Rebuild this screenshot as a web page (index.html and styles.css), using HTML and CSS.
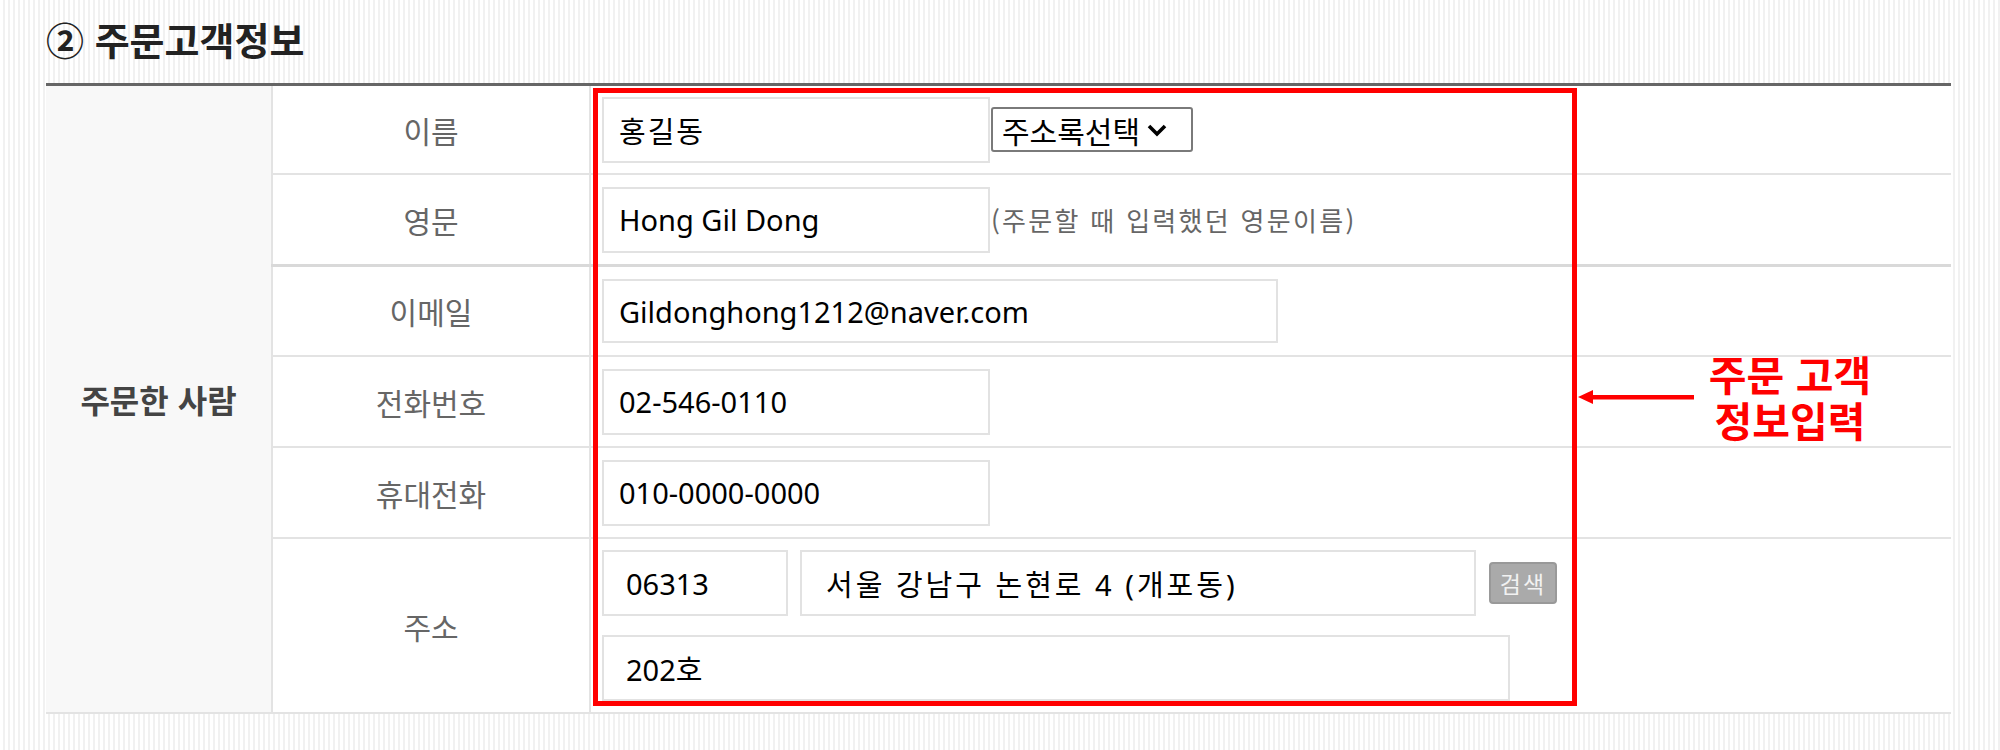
FILE: index.html
```html
<!DOCTYPE html>
<html lang="ko">
<head>
    <meta charset="UTF-8">
    <meta name="viewport" content="width=device-width, initial-scale=1.0">
    <title>주문고객정보</title>
    <link rel="stylesheet" href="styles.css">
</head>
<body>
    <div class="page">
        <h2 class="sec-title">② 주문고객정보</h2>

        <div class="form-area">
            <table class="order-table">
                <colgroup>
                    <col class="col-group">
                    <col class="col-label">
                    <col>
                </colgroup>
                <tr class="row-first">
                    <th rowspan="6" class="group">주문한 사람</th>
                    <th class="label">이름</th>
                    <td>
                        <div class="field">
                            <input type="text" class="inp inp-md inp-name" value="홍길동">
                            <div class="fake-select">
                                <span>주소록선택</span>
                                <svg width="22" height="16" viewBox="0 0 22 16"><path d="M3 4 L11 12 L19 4" fill="none" stroke="#000" stroke-width="3.6"/></svg>
                            </div>
                        </div>
                    </td>
                </tr>
                <tr class="row-split">
                    <th class="label">영문</th>
                    <td>
                        <div class="field">
                            <input type="text" class="inp inp-md" value="Hong Gil Dong">
                            <span class="hint">(주문할 때 입력했던 영문이름)</span>
                        </div>
                    </td>
                </tr>
                <tr class="row-mail">
                    <th class="label">이메일</th>
                    <td><input type="text" class="inp inp-lg" value="Gildonghong1212@naver.com"></td>
                </tr>
                <tr>
                    <th class="label">전화번호</th>
                    <td><input type="text" class="inp inp-md" value="02-546-0110"></td>
                </tr>
                <tr>
                    <th class="label">휴대전화</th>
                    <td><input type="text" class="inp inp-md" value="010-0000-0000"></td>
                </tr>
                <tr class="row-addr">
                    <th class="label">주소</th>
                    <td>
                        <div class="field addr-line">
                            <input type="text" class="inp inp-zip" value="06313">
                            <input type="text" class="inp inp-addr" value="서울 강남구 논현로 4 (개포동)">
                            <button type="button" class="btn-search">검색</button>
                        </div>
                        <div class="field addr-line2">
                            <input type="text" class="inp inp-detail" value="202호">
                        </div>
                    </td>
                </tr>
            </table>

            <!-- annotation over the form -->
            <div class="mark-box"></div>
            <svg class="mark-arrow" width="116" height="14" viewBox="0 0 116 14">
                <polygon points="0,7 15,0 15,14" fill="#ff0000"/>
                <rect x="12" y="5" width="104" height="4.5" fill="#ff0000"/>
            </svg>
            <div class="mark-note">
                <span>주문 고객</span>
                <span>정보입력</span>
            </div>
        </div>
    </div>
</body>
</html>
```

FILE: styles.css
```css
body {
    margin: 0;
    font-family: "Noto Sans CJK KR", sans-serif;
    background: repeating-linear-gradient(90deg, #ffffff 0 3px, #f1f1f1 3px 5px);
    color: #222;
}

.page {
    width: 1905px;
    height: 750px;
    padding-left: 46px;
    overflow: hidden;
}

.sec-title {
    margin: 0;
    height: 83px;
    padding-top: 18px;
    box-sizing: border-box;
    font-size: 38px;
    line-height: 42px;
    font-weight: 700;
    color: #222;
}

.form-area {
    position: relative;
}

.order-table {
    width: 100%;
    border-collapse: collapse;
    table-layout: fixed;
    background: #fff;
    border-top: 3px solid #666;
}

.col-group {
    width: 226px;
}

.col-label {
    width: 318px;
}

.order-table th,
.order-table td {
    border: 2px solid #e3e3e3;
    height: 89px;
    padding: 0;
}

.order-table .row-first th,
.order-table .row-first td {
    height: 87px;
}

.order-table .row-mail th,
.order-table .row-mail td {
    height: 88px;
}

.order-table tr > :first-child {
    border-left: none;
}

.order-table tr > :last-child {
    border-right: none;
}

.order-table td {
    padding: 0 11px;
}

.group {
    background: #f8f8f8;
    font-size: 32px;
    font-weight: 700;
    color: #444;
}

.label {
    font-size: 30px;
    font-weight: 400;
    color: #666;
}

.row-split th,
.row-split td {
    border-bottom: 3px solid #d9d9d9;
}

.order-table .row-addr td,
.order-table .row-addr th {
    height: 173px;
}

.field {
    display: flex;
    align-items: center;
}

.inp {
    height: 66px;
    box-sizing: border-box;
    border: 2px solid #e2e2e2;
    padding: 0 15px;
    font-family: "Noto Sans", "Noto Sans CJK KR", sans-serif;
    font-size: 29px;
    color: #000;
    background: #fff;
    outline: none;
}

.inp-md {
    width: 388px;
}

.inp-name {
    letter-spacing: 2px;
}

.inp-lg {
    width: 676px;
    height: 64px;
}

.inp-zip {
    width: 186px;
    padding-left: 22px;
}

.inp-addr {
    width: 676px;
    margin-left: 12px;
    padding-left: 24px;
    letter-spacing: 3px;
}

.inp-detail {
    width: 908px;
    padding-left: 22px;
}

.addr-line2 {
    margin-top: 19px;
}

.fake-select {
    display: flex;
    align-items: center;
    gap: 6px;
    width: 202px;
    height: 45px;
    box-sizing: border-box;
    margin-left: 1px;
    padding: 0 0 0 9px;
    border: 2px solid #7a7a7a;
    border-radius: 3px;
    font-size: 30px;
    color: #000;
}

.hint {
    margin-left: 1px;
    font-size: 26px;
    letter-spacing: 2.3px;
    color: #666;
}

.btn-search {
    width: 68px;
    height: 42px;
    margin-left: 13px;
    padding: 0;
    border: 2px solid #999;
    border-radius: 4px;
    background: #aaa;
    color: #f2f2f2;
    font-family: "Noto Sans CJK KR", sans-serif;
    font-size: 23px;
    letter-spacing: 2px;
}

/* red annotation */
.mark-box {
    position: absolute;
    left: 547px;
    top: 5px;
    width: 984px;
    height: 618px;
    box-sizing: border-box;
    border: 5px solid #ff0000;
}

.mark-arrow {
    position: absolute;
    left: 1532px;
    top: 307px;
}

.mark-note {
    position: absolute;
    left: 1644px;
    top: 270px;
    width: 200px;
    display: flex;
    flex-direction: column;
    align-items: center;
    gap: 6px;
    font-size: 41px;
    line-height: 40px;
    font-weight: 700;
    color: #ff0000;
}
```
